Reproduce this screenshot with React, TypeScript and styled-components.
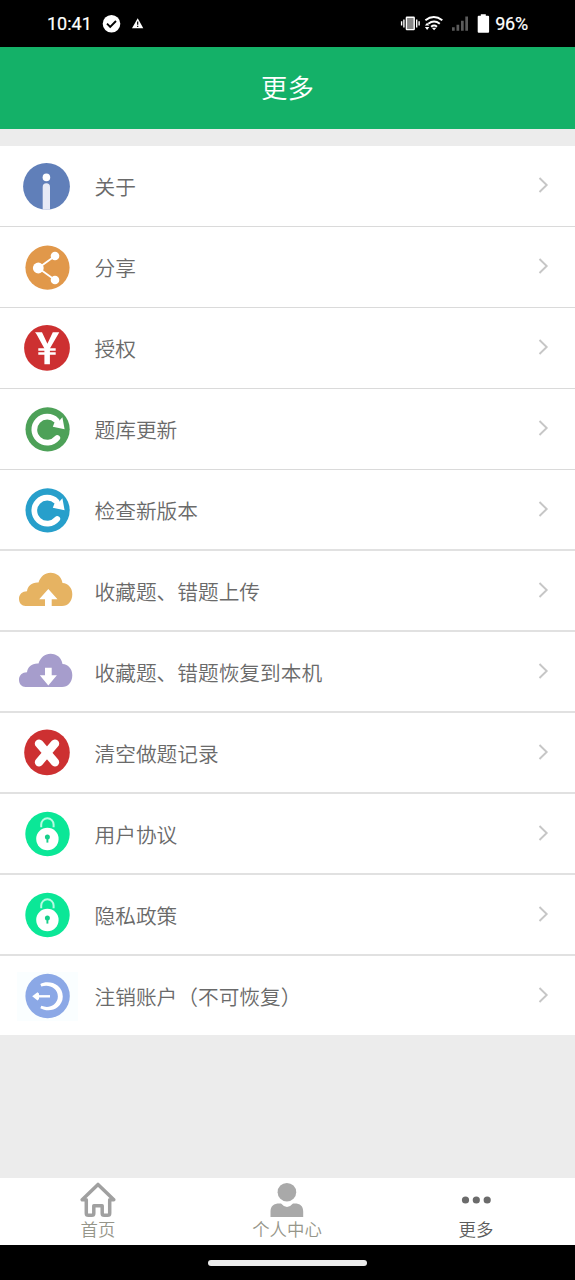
import React from "react";
import styled, { createGlobalStyle } from "styled-components";

const Global = createGlobalStyle`
  * { box-sizing: border-box; }
  body { margin: 0; background: #ececec; font-family: Roboto, "Noto Sans CJK SC", sans-serif; }
`;

const Screen = styled.div`
  width: 575px;
  height: 1280px;
  display: flex;
  flex-direction: column;
  background: #ececec;
  overflow: hidden;
`;

const StatusBar = styled.div`
  height: 47px;
  flex: none;
  display: flex;
  align-items: center;
  justify-content: space-between;
  padding: 0 47px;
  background: #000;
  color: #fff;
  font-size: 18px;
  font-weight: 400;
`;

const StatusGroup = styled.div`
  display: flex;
  align-items: center;
  svg { display: block; }
`;

const Clock = styled.span`
  width: 55px;
  letter-spacing: 0;
  -webkit-text-stroke: 0.2px #fff;
`;

const Percent = styled.span`
  margin-left: 5px;
  letter-spacing: -0.2px;
  -webkit-text-stroke: 0.2px #fff;
`;

const Header = styled.header`
  height: 82px;
  flex: none;
  display: flex;
  align-items: center;
  justify-content: center;
  padding-bottom: 4px;
  background: #14b168;
  color: #fff;
  font-size: 26.4px;
  font-weight: 350;
`;

const List = styled.ul`
  list-style: none;
  margin: 17px 0 0;
  padding: 0;
  background: #fff;
`;

const Row = styled.li`
  height: 81px;
  display: flex;
  align-items: center;
  border-bottom: 1px solid #dadada;
  padding: 0 24px 0 12px;
  &:nth-child(n + 5) { border-bottom: 2px solid #e1e1e1; }
  &:last-child { height: 79px; border-bottom: 0; }
`;

const RowIcon = styled.svg`
  width: 70px;
  height: 79px;
  flex: none;
  align-self: flex-start;
`;

const RowLabel = styled.span`
  flex: 1;
  align-self: flex-start;
  margin: 27px 0 0 12.5px;
  font-size: 20.7px;
  font-weight: 350;
  line-height: 30px;
  color: #6a6a6a;
`;

const Chevron = styled.svg`
  width: 15px;
  height: 20px;
  align-self: flex-start;
  margin-top: 29px;
`;

const TabBar = styled.nav`
  height: 67px;
  flex: none;
  margin-top: auto;
  padding: 0 4.5px 0 3.5px;
  display: flex;
  background: #fff;
`;

const Tab = styled.div<{ $active?: boolean }>`
  flex: 1;
  display: flex;
  flex-direction: column;
  align-items: center;
  padding-top: 4px;
  font-size: 17.4px;
  font-weight: 350;
  line-height: 23px;
  color: ${(p) => (p.$active ? "#5c5c5c" : "#96968a")};
  svg { width: 38px; height: 37px; flex: none; }
`;

const GestureBar = styled.div`
  height: 35px;
  flex: none;
  display: flex;
  justify-content: center;
  align-items: center;
  background: #000;
`;

const Handle = styled.div`
  width: 159px;
  height: 6px;
  border-radius: 3px;
  background: #ececec;
`;

const Info = () => (
  <>
    <circle cx="46.5" cy="40.4" r="23.4" fill="#607fb9" />
    <circle cx="46.4" cy="31.4" r="3.8" fill="#fff" />
    <path d="M42.7 63.4V41a3.65 3.65 0 0 1 7.3 0v22.4q-3.6.8-7.3 0Z" fill="#e7eaf6" />
  </>
);

const Share = () => (
  <>
    <circle cx="47.5" cy="40.6" r="22.1" fill="#e1984a" />
    <path d="M55 29 38.3 41 55 53" fill="none" stroke="#fff" strokeWidth="1.8" />
    <g fill="#fff">
      <circle cx="38.3" cy="41" r="5.4" />
      <circle cx="55" cy="29" r="4.3" />
      <circle cx="55" cy="53" r="4.3" />
    </g>
  </>
);

const Yuan = () => (
  <>
    <circle cx="47" cy="39.9" r="22.9" fill="#cd3031" />
    <path d="M35 24.200H42L47.400 35.800 52.800 24.200H59.300L49.900 40.500V56.200H44.400V40.500L36.400 26Z" fill="#fff" />
    <path d="M38.300 41.500h17.400M38.300 45.500h17.400" fill="none" stroke="#fff" strokeWidth="2.300" />
  </>
);

const Refresh = ({ color }: { color: string }) => (
  <>
    <circle cx="47.6" cy="40.3" r="22.1" fill={color} />
    <path d="M56.500 31.400A13 13 0 1 0 57.300 48.900" fill="none" stroke="#fff" strokeWidth="5.700" strokeLinecap="round" />
    <path d="M62.400 28.200 64.600 40.300 52.800 37.700 54.500 33.500 59.500 31.500Z" fill="#fff" />
  </>
);

const Cloud = ({ color, children }: { color: string; children: React.ReactNode }) => (
  <>
    <path
      d="M25.500 55C21.800 55 19 52 19 47.800c0-4.600 3.300-7.400 8-7.500.6-5.700 5.200-9.300 11.500-8.800C40.500 25.500 45 21.800 50.500 21.800c6.500 0 11 4.200 12 10.300 5.800.5 9.800 4.900 9.800 11.100C72.300 50.300 68 55 62 55Z"
      fill={color}
    />
    {children}
  </>
);

const Cross = () => (
  <>
    <circle cx="47" cy="39.4" r="22.8" fill="#cd3031" />
    <path d="M39 30.600 55 49.200M55 30.600 39 49.200" stroke="#fff" strokeWidth="8.400" strokeLinecap="round" />
  </>
);

const Lock = () => (
  <>
    <circle cx="47.5" cy="40" r="22.200" fill="#0be797" />
    <path d="M41.200 33.300V30.500a6.200 6.200 0 0 1 12.400 0v2.800" fill="none" stroke="#b9fae2" strokeWidth="2" />
    <circle cx="47.400" cy="45" r="11.200" fill="#fff" />
    <circle cx="47.400" cy="43" r="2.500" fill="#16cf8a" />
    <path d="M47.400 43v5.600" stroke="#16cf8a" strokeWidth="1.900" />
  </>
);

const Leave = () => (
  <>
    <path d="M17 16h61v49H17Z" fill="#fafeff" />
    <circle cx="47.600" cy="40" r="22.200" fill="#8ba8e6" />
    <path d="M40.300 27.900C45 25.200 53 25.700 57.800 29.700a14 14 0 0 1 0 21.400C53 55.200 45 55 40.300 52.200L41.300 49.800C46 51.600 50.500 51.200 54 48.400a10.200 10.200 0 0 0 0-16C50.500 29.700 46 29 41.300 30.600Z" fill="#fff" />
    <path d="M36 40.300h14" stroke="#fff" strokeWidth="2.400" />
    <path d="M32.200 40.300 37.500 36.200 39 37.500v5.600l-1.500 1.500Z" fill="#fff" />
  </>
);

const items: { label: string; icon: React.ReactNode }[] = [
  { label: "关于", icon: <Info /> },
  { label: "分享", icon: <Share /> },
  { label: "授权", icon: <Yuan /> },
  { label: "题库更新", icon: <Refresh color="#4da158" /> },
  { label: "检查新版本", icon: <Refresh color="#279fcb" /> },
  {
    label: "收藏题、错题上传",
    icon: (
      <Cloud color="#e6b362">
        <path d="M48.300 38 57.500 48.300H51.700V55.200H45V48.300H39.200Z" fill="#fff" />
      </Cloud>
    ),
  },
  {
    label: "收藏题、错题恢复到本机",
    icon: (
      <Cloud color="#a69dcc">
        <path d="M45 35.800h6.700v7.400h5.200L48.300 53.600 39.800 43.200H45Z" fill="#fff" />
      </Cloud>
    ),
  },
  { label: "清空做题记录", icon: <Cross /> },
  { label: "用户协议", icon: <Lock /> },
  { label: "隐私政策", icon: <Lock /> },
  { label: "注销账户（不可恢复）", icon: <Leave /> },
];

export default function App() {
  return (
    <Screen>
      <Global />
      <StatusBar>
        <StatusGroup>
          <Clock>10:41</Clock>
          <svg width="45" height="20" viewBox="102 14 45 20">
            <circle cx="111.500" cy="23.700" r="8.800" fill="#fff" />
            <path d="m107 23.700 3.200 3.200 5.800-5.900" fill="none" stroke="#000" strokeWidth="1.900" />
            <path d="M137.700 18.200 143.300 28.200H132Z" fill="#fff" />
            <path d="M137.700 21.500v3.300M137.700 25.800v1.300" stroke="#000" strokeWidth="1.200" />
          </svg>
        </StatusGroup>
        <StatusGroup>
          <svg width="91" height="22" viewBox="399.500 12.500 91 22">
            <g fill="none" stroke="#fff" strokeWidth="1.400">
              <rect x="406.900" y="16.700" width="7.800" height="12.400" rx="0.500" fill="#888" />
              <path d="M404.400 18.900v8M417.200 18.900v8M402.100 20.800v4.200M419.600 20.800v4.200" />
            </g>
            <g fill="none" stroke="#fff" strokeWidth="2">
              <path d="M425.900 19.800Q434.300 13.300 442.800 19.800M428.800 23.200Q434.600 18.800 440.300 23.200M431.600 26.200Q434.600 24 437.500 26.200" />
            </g>
            <path d="m432.300 27.300 2.300 2.500 2.300-2.500ZM427.600 22.300l2.200 2.800h-4.400ZM425.400 26.500h4.400l-2.200 2.900Z" fill="#fff" />
            <g fill="#5b5b5b">
              <path d="M452.500 26.700h2.700v3.600h-2.700ZM457 24.200h2.700v6.100H457ZM461.500 20.300h2.700v10h-2.700ZM465.800 16h2.700v14.300h-2.700Z" />
            </g>
            <path d="M481.300 13.800h5v1.500h2.300q1 0 1 1v15q0 1-1 1h-9.400q-1 0-1-1v-15q0-1 1-1H481.300Z" fill="#fff" />
          </svg>
          <Percent>96%</Percent>
        </StatusGroup>
      </StatusBar>
      <Header>更多</Header>
      <List>
        {items.map((item) => (
          <Row key={item.label}>
            <RowIcon viewBox="12 0 70 79">{item.icon}</RowIcon>
            <RowLabel>{item.label}</RowLabel>
            <Chevron viewBox="0 0 15 20">
              <path d="m3.500 3 7.200 7-7.200 7" fill="none" stroke="#c6c6c6" strokeWidth="1.900" />
            </Chevron>
          </Row>
        ))}
      </List>
      <TabBar>
        <Tab>
          <svg viewBox="0 0 38 37">
            <path
              d="M19 2.400 3.200 17.800H7.300V31.200Q7.300 33.300 9.400 33.300H12.800Q14.800 33.300 14.800 31.200V23.800H23.200V31.200Q23.200 33.300 25.200 33.300H28.600Q30.700 33.300 30.700 31.200V17.800H34.800Z"
              fill="none" stroke="#a0a0a0" strokeWidth="3.500" strokeLinejoin="round"
            />
          </svg>
          首页
        </Tab>
        <Tab>
          <svg viewBox="0 0 38 37">
            <circle cx="18.900" cy="10.200" r="9.300" fill="#a9a9a9" />
            <path d="M2.500 35V29.500C2.500 23.500 6.500 21 13 21.500Q19 28.500 25 21.500C31.500 21 35.200 23.500 35.200 29.500V35Z" fill="#a9a9a9" />
          </svg>
          个人中心
        </Tab>
        <Tab $active>
          <svg viewBox="0 0 38 37">
            <g fill="#6b6b6b">
              <circle cx="8.500" cy="18" r="3.600" />
              <circle cx="19.300" cy="18" r="3.600" />
              <circle cx="30.200" cy="18" r="3.600" />
            </g>
          </svg>
          更多
        </Tab>
      </TabBar>
      <GestureBar>
        <Handle />
      </GestureBar>
    </Screen>
  );
}
